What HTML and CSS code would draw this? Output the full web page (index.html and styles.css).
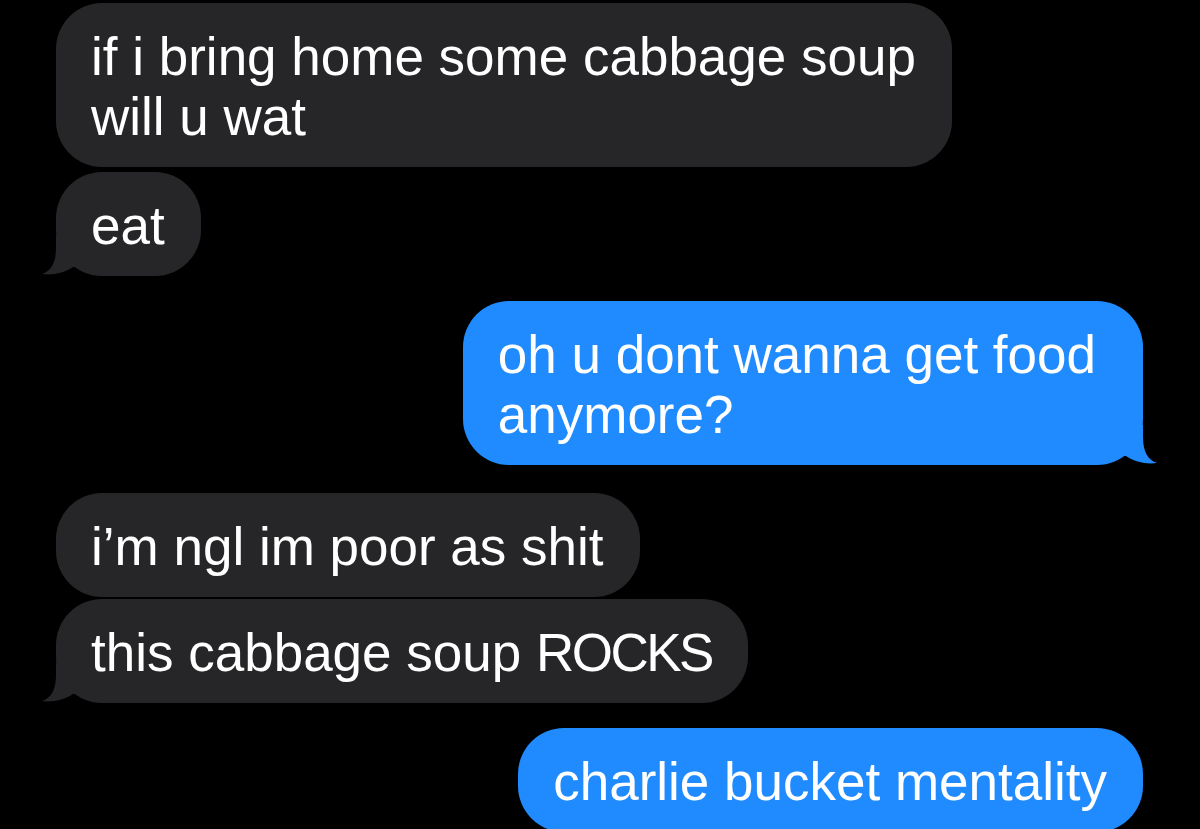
FILE: index.html
```html
<!DOCTYPE html>
<html>
<head>
<meta charset="utf-8">
<link rel="stylesheet" href="styles.css">
</head>
<body>
<div class="thread">
  <div class="bubble received first">if i bring home some cabbage soup<br>will u wat</div>
  <div class="bubble received tight">eat<svg class="tail" width="40" height="40" viewBox="0 0 40 40"><path d="M14 0 L14 12 C14 27 9 35 0 38 C11 39.5 22 37 31 31 L40 31 L40 0 Z"/></svg></div>
  <div class="bubble sent group wide">oh u dont wanna get food<br>anymore?<svg class="tail" width="40" height="40" viewBox="0 0 40 40"><path d="M14 0 L14 12 C14 27 9 35 0 38 C11 39.5 22 37 31 31 L40 31 L40 0 Z"/></svg></div>
  <div class="bubble received group">i’m ngl im poor as shit</div>
  <div class="bubble received tighter">this cabbage soup <span class="caps">ROCKS</span><svg class="tail" width="40" height="40" viewBox="0 0 40 40"><path d="M14 0 L14 12 C14 27 9 35 0 38 C11 39.5 22 37 31 31 L40 31 L40 0 Z"/></svg></div>
  <div class="bubble sent group">charlie bucket mentality</div>
</div>
</body>
</html>
```
FILE: styles.css
```css
html, body {
  margin: 0;
  padding: 0;
  background: #000;
  height: 100%;
  overflow: hidden;
}

.thread {
  display: flex;
  flex-direction: column;
  padding-top: 3px;
  font-family: "Liberation Sans", Arial, sans-serif;
  font-size: 53px;
  line-height: 60px;
  color: #fff;
}

.bubble {
  position: relative;
  padding: 24px 36px 20px 35px;
  border-radius: 46px;
  white-space: nowrap;
}

.received {
  align-self: flex-start;
  margin-left: 56px;
  background: #262628;
  fill: #262628;
}

.sent {
  align-self: flex-end;
  margin-right: 57px;
  background: #1f8bfe;
  fill: #1f8bfe;
}

.wide {
  padding-right: 47px;
}

.caps {
  letter-spacing: -2.5px;
}

.tight {
  margin-top: 5px;
}

.tighter {
  margin-top: 2px;
}

.group {
  margin-top: 26px;
}

.sent.group {
  margin-top: 25px;
}

.received.group {
  margin-top: 28px;
}

.tail {
  position: absolute;
  bottom: 0;
  left: -14px;
  display: block;
}

.sent .tail {
  left: auto;
  right: -14px;
  transform: scaleX(-1);
}
```
